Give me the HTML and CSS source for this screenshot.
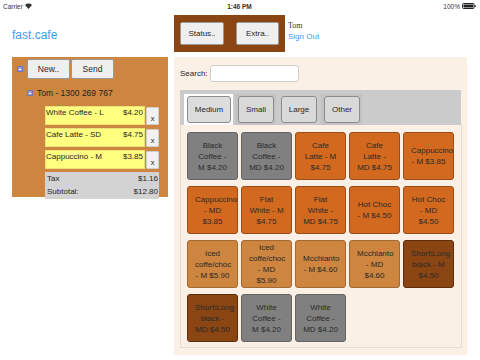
FILE: index.html
```html
<!DOCTYPE html>
<html lang="en">
<head>
  <meta charset="UTF-8" />
  <meta name="viewport" content="width=device-width, initial-scale=1.0"/>
  <title>fast.cafe</title>
  <link rel="stylesheet" href="styles.css">
</head>
<body>
  <!-- iOS status bar -->
  <div class="statusbar">
    <div class="carrier">
      Carrier
      <svg class="wifi" width="7" height="6" viewBox="0 0 7 6">
        <path d="M0 2 A5 5 0 0 1 7 2 L3.5 6 Z" fill="#333"/>
      </svg>
    </div>
    <div class="clock">1:46 PM</div>
    <div class="battery">
      100%
      <svg width="14" height="6" viewBox="0 0 14 6">
        <rect x="0.5" y="0.5" width="11.5" height="5" rx="1" fill="none" stroke="#222"/>
        <rect x="1.5" y="1.5" width="9.5" height="3" fill="#222"/>
        <rect x="12.5" y="2" width="1.2" height="2" fill="#222"/>
      </svg>
    </div>
  </div>

  <header class="header">
    <div class="logo">fast.cafe</div>
    <div class="toolbox">
      <button class="btn tool">Status..</button>
      <button class="btn tool">Extra..</button>
    </div>
    <div class="user">
      <div class="user-name">Tom</div>
      <a class="signout" href="#">Sign Out</a>
    </div>
  </header>

  <div class="main">
    <!-- Order -->
    <div class="order">
      <div class="order-top">
        <span class="node"></span>
        <button class="btn order-btn">New..</button>
        <button class="btn order-btn">Send</button>
      </div>
      <div class="customer">
        <span class="node"></span>
        Tom - 1300 269 767
      </div>
      <div class="items">
        <div class="item">
          <div class="item-line"><span>White Coffee - L</span><span>$4.20</span></div>
          <button class="remove">x</button>
        </div>
        <div class="item">
          <div class="item-line"><span>Cafe Latte - SD</span><span>$4.75</span></div>
          <button class="remove">x</button>
        </div>
        <div class="item">
          <div class="item-line"><span>Cappuccino - M</span><span>$3.85</span></div>
          <button class="remove">x</button>
        </div>
        <div class="totals">
          <div class="total-row"><span>Tax</span><span>$1.16</span></div>
          <div class="total-row"><span>Subtotal:</span><span>$12.80</span></div>
        </div>
      </div>
    </div>

    <!-- Menu -->
    <div class="menu">
      <div class="search">
        <label for="search">Search:</label>
        <input id="search" type="text" />
      </div>
      <ul class="tabs">
        <li class="tab active"><button class="tab-btn medium">Medium</button></li>
        <li class="tab shaded"><button class="tab-btn small">Small</button></li>
        <li class="tab"><button class="tab-btn">Large</button></li>
        <li class="tab shaded"><button class="tab-btn">Other</button></li>
      </ul>
      <div class="tab-panel">
        <div class="tiles">
          <div class="tile gray"><span>Black Coffee - M $4.20</span></div>
          <div class="tile gray"><span>Black Coffee - MD $4.20</span></div>
          <div class="tile choc"><span>Cafe Latte - M $4.75</span></div>
          <div class="tile choc"><span>Cafe Latte - MD $4.75</span></div>
          <div class="tile choc"><span>Cappuccino - M $3.85</span></div>

          <div class="tile choc"><span>Cappuccino - MD $3.85</span></div>
          <div class="tile choc"><span>Flat White - M $4.75</span></div>
          <div class="tile choc"><span>Flat White - MD $4.75</span></div>
          <div class="tile choc"><span>Hot Choc - M $4.50</span></div>
          <div class="tile choc"><span>Hot Choc - MD $4.50</span></div>

          <div class="tile peru"><span>Iced coffe/choc - M $5.90</span></div>
          <div class="tile peru"><span>Iced coffe/choc - MD $5.90</span></div>
          <div class="tile peru"><span>Mcchianto - M $4.60</span></div>
          <div class="tile peru"><span>Mcchianto - MD $4.60</span></div>
          <div class="tile brown"><span>Short\Long black - M $4.50</span></div>

          <div class="tile brown"><span>Short\Long black - MD $4.50</span></div>
          <div class="tile gray"><span>White Coffee - M $4.20</span></div>
          <div class="tile gray"><span>White Coffee - MD $4.20</span></div>
        </div>
      </div>
    </div>
  </div>
</body>
</html>
```

FILE: styles.css
```css
:root {
  --link: #3d9cf2;
  --brown: #8b4513;
  --peru: #cd853f;
  --choc: #d2691e;
  --linen: #faf0e6;
  --text: #262626;
}

* {
  box-sizing: border-box;
}

body {
  margin: 0;
  font-family: "Liberation Sans", Arial, sans-serif;
  font-size: 8px;
  color: var(--text);
  background: #fff;
  width: 480px;
  height: 360px;
  overflow: hidden;
}

button {
  font-family: inherit;
  font-size: 8px;
  color: var(--text);
  cursor: pointer;
}

/* status bar */
.statusbar {
  display: flex;
  justify-content: space-between;
  align-items: center;
  height: 12px;
  padding: 0 4px 0 3px;
  font-size: 6.5px;
  color: #333;
}

.carrier, .battery {
  display: flex;
  align-items: center;
  gap: 2px;
  width: 60px;
}

.battery {
  justify-content: flex-end;
}

.clock {
  font-weight: bold;
}

/* header */
.header {
  display: flex;
  align-items: flex-start;
  height: 40px;
  margin-top: 3px;
}

.logo {
  width: 174px;
  padding-left: 12px;
  align-self: center;
  font-size: 12px;
  color: var(--link);
}

.toolbox {
  display: flex;
  gap: 12px;
  background: var(--brown);
  padding: 7px 6px;
  height: 37px;
  width: 111px;
}

.btn {
  background: #efefef;
  border: 1px solid #9a9a9a;
  border-radius: 2px;
  padding: 0;
}

.tool {
  width: 44px;
  height: 23px;
}

.tool + .tool {
  width: 43px;
}

.user {
  margin-left: 3px;
  padding-top: 5px;
  line-height: 11px;
}

.user-name {
  font-family: "Liberation Serif", "Times New Roman", serif;
  color: #333;
}

.signout {
  color: var(--link);
  text-decoration: none;
}

/* layout */
.main {
  display: flex;
  gap: 6px;
  padding-left: 12px;
  margin-top: 2px;
  align-items: flex-start;
}

/* order panel */
.order {
  width: 156px;
  height: 140px;
  background: var(--peru);
  padding: 2px 0 0 5px;
}

.order-top {
  display: flex;
  align-items: center;
}

.node {
  display: inline-block;
  width: 6px;
  height: 6px;
  background: #9a9ae0;
  border: 1px solid #7474b8;
  position: relative;
  margin-right: 4px;
}

.node::after {
  content: "";
  position: absolute;
  left: 1px;
  right: 1px;
  top: 1.5px;
  height: 1px;
  background: #fff;
}

.order-btn {
  width: 43px;
  height: 20px;
  font-size: 8.5px;
}

.order-btn + .order-btn {
  margin-left: 1px;
}

.customer {
  display: flex;
  align-items: center;
  margin: 9px 0 0 10px;
  font-size: 8.5px;
  color: #222;
}

.items {
  margin: 8px 0 0 28px;
  width: 114px;
}

.item {
  display: flex;
  align-items: flex-start;
  height: 19px;
  margin-bottom: 3px;
}

.item-line {
  display: flex;
  justify-content: space-between;
  width: 100px;
  height: 19px;
  background: #ffff80;
  border: 1px solid #ece27a;
  padding: 1px 1px 0 0;
  line-height: 10px;
}

.remove {
  width: 13px;
  height: 18px;
  margin: 1px 0 0 1px;
  background: #f1f1f1;
  border: 1px solid #cfcfcf;
  border-radius: 1px;
  padding: 5px 0 0;
  font-size: 7.5px;
  line-height: 10px;
}

.totals {
  margin-top: 2px;
  height: 27px;
  background: #d3d3d3;
  padding: 1px 1px 0 2px;
}

.total-row {
  display: flex;
  justify-content: space-between;
  line-height: 12.5px;
}

/* menu panel */
.menu {
  width: 293px;
  height: 298px;
  background: var(--linen);
  padding: 8px 5px 0 6px;
}

.search {
  display: flex;
  align-items: center;
  gap: 2px;
}

.search input {
  width: 89px;
  height: 17px;
  border: 1px solid #cfcfcf;
  border-radius: 3px;
  background: #fff;
  padding: 0 3px;
}

.tabs {
  display: flex;
  gap: 2px;
  list-style: none;
  margin: 8px 0 0;
  padding: 4px 0 0 4px;
  height: 35px;
  width: 281px;
  background: #cbcbcb;
}

.tab {
  padding: 2px 2px 2px 3px;
  height: 31px;
}

.tab.active {
  background: #fff;
}

.tab.shaded {
  background: #c3c3c3;
}

.tab-btn {
  width: 36px;
  height: 27px;
  background: #d9d9d9;
  border: 1px solid #8c8c8c;
  border-radius: 3px;
  padding: 0;
}

.tab-btn.medium {
  width: 44px;
  background: #dcdcdc;
}

.tab-btn.small {
  width: 36px;
}

.tab-panel {
  width: 282px;
  height: 223px;
  border: 1px solid #e6ddd3;
  border-top: none;
  padding: 7px 0 0 6px;
}

.tiles {
  display: grid;
  grid-template-columns: repeat(5, 51px);
  grid-auto-rows: 48px;
  column-gap: 3px;
  row-gap: 6px;
}

.tile {
  display: flex;
  align-items: center;
  border: 1px solid #666;
  border-radius: 3px;
  padding: 0 7px;
  line-height: 11px;
  color: #2a2a2a;
}

.tile span {
  display: block;
  width: 100%;
  text-align: center;
}

.gray { background: #808080; border-color: #636363; }
.choc { background: var(--choc); border-color: #9b4c18; }
.peru { background: var(--peru); border-color: #a5692f; }
.brown { background: var(--brown); border-color: #5c2d0c; }
```
